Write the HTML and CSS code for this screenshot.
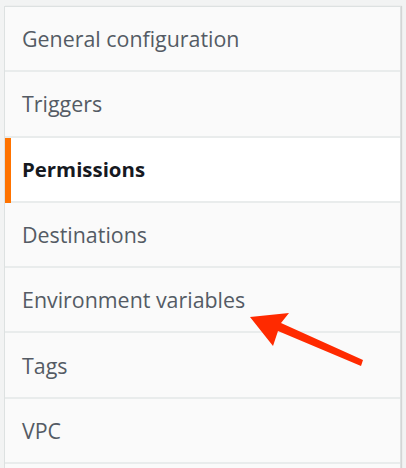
FILE: index.html
```html
<!DOCTYPE html>
<html>
<head>
<meta charset="utf-8">
<link rel="stylesheet" href="styles.css">
</head>
<body>
<nav class="panel">
  <div class="item">General configuration</div>
  <div class="item">Triggers</div>
  <div class="item active">Permissions</div>
  <div class="item">Destinations</div>
  <div class="item">Environment variables</div>
  <div class="item">Tags</div>
  <div class="item">VPC</div>
  <div class="item"></div>
</nav>
<svg class="arrow" width="406" height="468" viewBox="0 0 406 468">
  <polygon fill="#ff2a00" points="250,317 289,313 281,323 363,360 361,366 278,331 273,346"/>
</svg>
</body>
</html>
```
FILE: styles.css
```css
html, body {
  margin: 0;
  padding: 0;
}
body {
  background: #f2f3f3;
  width: 406px;
  height: 468px;
  overflow: hidden;
  position: relative;
  font-family: "Open Sans", "Noto Sans", sans-serif;
}
.panel {
  margin: 6px 0 0 4px;
  width: 395px;
  border: 1px solid #dde1e1;
  border-bottom: none;
  box-shadow: 1px 0 1px rgba(0,0,0,0.12);
  background: #fafafa;
  display: flex;
  flex-direction: column;
}
.item {
  height: 63.3px;
  flex: 0 0 63.3px;
  border-bottom: 2px solid #e9ecec;
  display: flex;
  align-items: center;
  padding-left: 17px;
  font-size: 21.4px;
  font-weight: 500;
  color: #545b64;
  box-sizing: content-box;
  position: relative;
}
.item.active {
  background: #ffffff;
  color: #16191f;
  font-weight: 700;
  font-size: 20.4px;
}
.item.active::before {
  content: "";
  position: absolute;
  left: 0;
  top: 0;
  bottom: -2px;
  width: 6px;
  background: #ff7300;
}
.arrow {
  position: absolute;
  left: 0;
  top: 0;
  pointer-events: none;
}
```
